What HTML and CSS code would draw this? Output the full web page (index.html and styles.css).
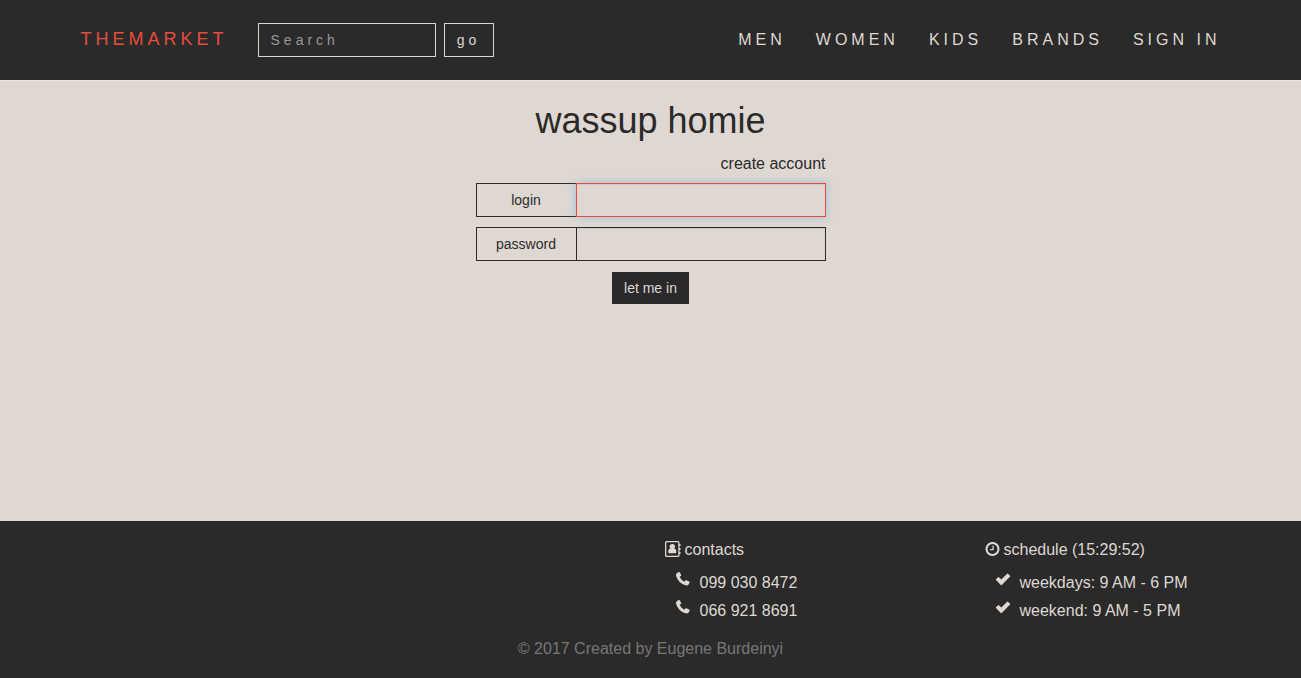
FILE: index.html
```html
<!DOCTYPE html>
<html lang="en">
<head>
<meta charset="utf-8">
<meta name="viewport" content="width=device-width, initial-scale=1">
<title>TheMarket</title>
<link rel="stylesheet" href="styles.css">
</head>
<body>
<svg class="sprite" aria-hidden="true">
  <symbol id="phone" viewBox="0 0 16 16">
    <path d="M1.600 2.400 3.500 1.100c.5-.3 1-.2 1.300.3l1.300 2.300c.3.5.2 1-.3 1.300l-1.100.8c.9 2.300 2.500 3.900 4.700 4.900l.9-1.100c.3-.4.8-.5 1.200-.3l2.600 1.200c.5.3.7.8.5 1.300l-1 1.700c-.6.8-1.700 1.100-2.900.8C6.300 13.200 2.300 9.400 1.100 4.700.8 3.700 1 2.900 1.600 2.400z"/>
  </symbol>
  <symbol id="check" viewBox="0 0 16 16">
    <path d="M1 8.300 3.100 6.200q.4-.4.800 0L6.300 8.500 12.100 2.700q.4-.4.800 0l2.200 2.100q.4.400 0 .8L6.800 13.900q-.5.400-1 0L1 9.100q-.4-.4 0-.8z"/>
  </symbol>
</svg>
<header class="header">
  <div class="header-inner">
    <a class="brand" href="#">THEMARKET</a>
    <form class="search">
      <input class="search-input" type="text" placeholder="Search" aria-label="Search">
      <button class="search-button" type="button">go</button>
    </form>
    <nav class="nav">
      <a href="#">MEN</a>
      <a href="#">WOMEN</a>
      <a href="#">KIDS</a>
      <a href="#">BRANDS</a>
      <a href="#">SIGN IN</a>
    </nav>
  </div>
</header>
<main class="main">
  <h1 class="title">wassup homie</h1>
  <form class="login-form">
    <a class="create" href="#">create account</a>
    <div class="field">
      <label for="login">login</label>
      <input class="active" id="login" type="text">
    </div>
    <div class="field">
      <label for="password">password</label>
      <input id="password" type="password">
    </div>
    <button class="submit" type="button">let me in</button>
  </form>
</main>
<footer class="footer">
  <div class="footer-columns">
    <section class="contacts">
      <h2 class="footer-title">
        <svg class="title-icon" viewBox="0 0 16 16" aria-hidden="true">
          <path fill-rule="evenodd" d="M1.500 0h11.500q1.500 0 1.500 1.500V3h1v2h-1v2h1v2h-1v2h1v2h-1v1.500q0 1.500-1.500 1.500H1.500Q0 16 0 14.500v-13Q0 0 1.500 0zM1.800 1.300q-.5 0-.5.5v12.400q0 .5.5.5h11q.5 0 .5-.5V1.800q0-.5-.5-.5z"/>
          <path d="M7.300 3a2.500 2.500 0 0 1 1.900 4.400q2.200.1 2.200 3.600 0 1.300-1.200 1.300H4.400q-1.200 0-1.200-1.300 0-3.500 2.200-3.600A2.500 2.500 0 0 1 7.300 3z"/>
        </svg>
        contacts
      </h2>
      <ul class="list">
        <li><svg class="list-icon" aria-hidden="true"><use href="#phone"/></svg>099 030 8472</li>
        <li><svg class="list-icon" aria-hidden="true"><use href="#phone"/></svg>066 921 8691</li>
      </ul>
    </section>
    <section class="schedule">
      <h2 class="footer-title">
        <svg class="title-icon clock" viewBox="128 128 1536 1536" aria-hidden="true">
          <path d="M1024 544v448q0 14-9 23t-23 9h-320q-14 0-23-9t-9-23v-64q0-14 9-23t23-9h224v-352q0-14 9-23t23-9h64q14 0 23 9t9 23zm416 352q0-148-73-273t-198-198-273-73-273 73-198 198-73 273 73 273 198 198 273 73 273-73 198-198 73-273zm224 0q0 209-103 385.500t-279.500 279.500-385.500 103-385.500-103-279.500-279.500-103-385.500 103-385.500 279.500-279.500 385.500-103 385.500 103 279.500 279.500 103 385.500z"/>
        </svg>
        schedule (15:29:52)
      </h2>
      <ul class="list">
        <li><svg class="list-icon" aria-hidden="true"><use href="#check"/></svg>weekdays: 9 AM - 6 PM</li>
        <li><svg class="list-icon" aria-hidden="true"><use href="#check"/></svg>weekend: 9 AM - 5 PM</li>
      </ul>
    </section>
  </div>
  <p class="copyright">© 2017 Created by Eugene Burdeinyi</p>
</footer>
</body>
</html>
```
FILE: styles.css
```css
* {
  box-sizing: border-box;
}

body {
  display: flex;
  flex-direction: column;
  min-height: 100vh;
  margin: 0;
  background: #dfd8d2;
  color: #2a2a2a;
  font: 16px/24px "Liberation Sans", Arial, sans-serif;
}

a {
  color: inherit;
  text-decoration: none;
}

input,
button {
  margin: 0;
  border-radius: 0;
  font: inherit;
  font-size: 14px;
  line-height: 20px;
}

svg {
  fill: currentColor;
}

.sprite {
  display: none;
}

.header {
  border-bottom: 1px solid #e7e7e7;
  background: #2a2a2a;
  color: #dfd8d2;
}

.header-inner {
  display: flex;
  align-items: center;
  max-width: 1170px;
  height: 80px;
  margin: 0 auto;
  padding: 0 15px;
  letter-spacing: 4px;
}

.brand {
  padding-bottom: 2px;
  color: #e74c3c;
  font-size: 18px;
}

.search {
  display: flex;
  gap: 8px;
  margin-left: 30px;
}

.search-input,
.search-button {
  height: 34px;
  padding: 6px 12px;
  border: 1px solid #dfd8d2;
  background: transparent;
  color: #dfd8d2;
  letter-spacing: 4px;
}

.search-input {
  width: 178px;
}

.search-button {
  min-width: 50px;
}

.search-input::placeholder {
  color: #999;
  opacity: 1;
}

.nav {
  display: flex;
  gap: 30px;
  margin-left: auto;
}

.main {
  flex: 1;
  padding: 20px 15px;
}

.title {
  margin: 0 0 12px;
  font-size: 36px;
  font-weight: 400;
  line-height: 40px;
  text-align: center;
}

.login-form {
  display: flex;
  flex-direction: column;
  max-width: 350px;
  margin: 0 auto;
}

.create {
  align-self: flex-end;
  margin-bottom: 8px;
  line-height: 22px;
}

.field {
  display: flex;
  margin-bottom: 10px;
}

.field label {
  width: 101px;
  margin-right: -1px;
  padding: 6px 12px;
  border: 1px solid #2a2a2a;
  font-size: 14px;
  line-height: 20px;
  text-align: center;
}

.field input {
  flex: 1;
  min-width: 0;
  height: 34px;
  padding: 6px 12px;
  border: 1px solid #2a2a2a;
  background: transparent;
  box-shadow: inset 0 1px 1px rgba(0, 0, 0, 0.075);
  outline: 0;
}

.field input.active {
  border-color: #e74c3c;
  box-shadow: inset 0 1px 1px rgba(0, 0, 0, 0.075), 0 0 8px rgba(102, 175, 233, 0.6);
}

.submit {
  align-self: center;
  margin-top: 1px;
  padding: 6px 12px;
  border: 0;
  background: #2a2a2a;
  color: #dfd8d2;
}

.footer {
  padding: 17px 0;
  background: #2a2a2a;
  color: #dfd8d2;
}

.footer-columns {
  display: grid;
  grid-template-columns: repeat(4, 1fr);
  max-width: 1280px;
  margin: 0 auto;
}

.footer-columns section {
  padding: 0 14px;
}

.contacts {
  grid-column: 3;
}

.footer-title {
  display: flex;
  align-items: center;
  gap: 4px;
  margin: 0 0 7px;
  font-size: 16px;
  font-weight: 400;
  line-height: 24px;
}

.title-icon {
  width: 16px;
  height: 16px;
  margin-bottom: 2px;
}

.title-icon.clock {
  width: 15px;
  height: 14px;
}

.list {
  margin: 0;
  padding: 0 0 0 10px;
  list-style: none;
}

.list li {
  display: flex;
  gap: 9px;
  line-height: 28px;
}

.list-icon {
  width: 16px;
  height: 16px;
  margin-top: 2px;
}

.copyright {
  margin: 12px 0 0;
  color: #777;
  text-align: center;
}
```
